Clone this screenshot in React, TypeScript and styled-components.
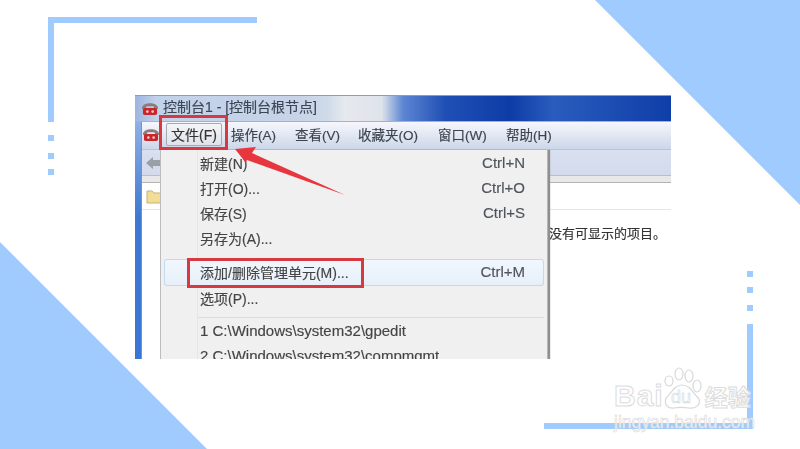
import React from "react";
import styled, { createGlobalStyle } from "styled-components";

const GlobalStyle = createGlobalStyle`
  html, body { margin: 0; padding: 0; background: #fff; }
  body { font-family: "Liberation Sans", "Noto Sans CJK SC", sans-serif; }
  * { box-sizing: border-box; }
`;

const blue = "#a0cbff";

const Slide = styled.div`
  position: relative;
  width: 800px;
  height: 449px;
  overflow: hidden;
  background: #fff;
`;

const Decor = styled.svg`
  position: absolute;
  inset: 0;
`;

const Window = styled.div`
  position: absolute;
  left: 135px;
  top: 95px;
  width: 536px;
  height: 264px;
  overflow: hidden;
  display: flex;
  flex-direction: column;
  background: #fff;
  color: #333;
  filter: blur(0.6px);
  -webkit-text-stroke: 0.15px currentColor;
`;

const TitleBar = styled.div`
  height: 27px;
  flex: none;
  display: flex;
  align-items: center;
  gap: 4px;
  padding-left: 6px;
  font-size: 14px;
  color: #3c4654;
  background: linear-gradient(90deg, #9db4e0 0%, #c2d2ea 4%, #c6d3e8 30%, #cfdbe9 36%, #e6e9ee 39%, #dfe4ea 46%, #5d86d3 50%, #1f4fb5 58%, #0e3ca6 70%, #2a5cbd 78%, #0f3ea8 100%);
  border-top: 1px solid #7f9bd8;
  border-bottom: 1px solid #9fb2d4;
`;

const TitleText = styled.span`
  padding-bottom: 6px;
`;

const Body = styled.div`
  flex: 1;
  display: flex;
  min-height: 0;
`;

const Edge = styled.div`
  width: 7px;
  flex: none;
  background: linear-gradient(180deg, #8fb0e6, #3f78d2 40%, #3a76d4);
  border-right: 1px solid #8a8f98;
`;

const Main = styled.div`
  flex: 1;
  display: flex;
  flex-direction: column;
  min-width: 0;
`;

const MenuBar = styled.div`
  height: 28px;
  flex: none;
  display: flex;
  align-items: center;
  padding-bottom: 3px;
  font-size: 13.5px;
  color: #3d4450;
  background: linear-gradient(180deg, #f6f7fc 0%, #ccd7e9 100%);
  border-bottom: 1px solid #b9c3d2;
`;

const MenuItem = styled.span<{ $w: number }>`
  width: ${(p) => p.$w}px;
  flex: none;
  white-space: nowrap;
`;

const FileTab = styled.span`
  width: 56px;
  height: 23px;
  margin: 0 9px 0 6px;
  flex: none;
  display: flex;
  align-items: center;
  justify-content: center;
  border: 1px solid #a4a9b2;
  border-radius: 2px;
  font-size: 14px;
  color: #333;
  background: linear-gradient(180deg, #f4f5f7, #dfe3e9);
`;

const Toolbar = styled.div`
  height: 26px;
  flex: none;
  display: flex;
  align-items: center;
  padding-left: 3px;
  background: linear-gradient(180deg, #d9e1f0, #d2daec);
  border-bottom: 1px solid #b9bfca;
`;

const Band = styled.div`
  height: 7px;
  flex: none;
  background: #e8e8ea;
  border-bottom: 1px solid #b5b2b0;
`;

const Header = styled.div`
  height: 27px;
  flex: none;
  display: flex;
  align-items: center;
  padding-left: 4px;
  background: #fff;
  border-bottom: 1px solid #e3e6ea;
`;

const Content = styled.div`
  flex: 1;
  display: flex;
  justify-content: flex-end;
  padding: 13px 5px 0 0;
  font-size: 13px;
  color: #333;
  background: #fff;
`;

const Menu = styled.div`
  position: absolute;
  left: 25px;
  top: 55px;
  width: 388px;
  height: 220px;
  padding-top: 1px;
  background: #f0f0f0;
  border-left: 1px solid #bdbdbd;
  border-right: 1px solid #b5b5b5;
  box-shadow: 2px 0 1px #8f8f8f;
  font-size: 14px;
  color: #444;
  &::before {
    content: "";
    position: absolute;
    left: 36px;
    top: 0;
    bottom: 0;
    width: 1px;
    background: #e6e6e6;
  }
`;

const Row = styled.div<{ $on?: boolean; $h?: number; $path?: boolean }>`
  position: relative;
  display: flex;
  align-items: center;
  justify-content: space-between;
  height: ${(p) => p.$h ?? 25}px;
  margin: 0 3px;
  padding: 0 19px 2px 36px;
  border-radius: 3px;
  white-space: nowrap;
  ${(p) => (p.$path ? "font-size: 15px;" : "")}
  ${(p) =>
    p.$on
      ? `background: linear-gradient(180deg, #f2f7fd, #e6eff9); box-shadow: inset 0 0 0 1px #c5d8ee;`
      : ""}
`;

const Shortcut = styled.span`
  font-size: 15px;
  color: #4f545c;
`;

const Divider = styled.div`
  height: 1px;
  margin: 0 3px 0 37px;
  background: #dcdcdc;
`;

const Highlight = styled.div<{ $x: number; $y: number; $w: number; $h: number }>`
  position: absolute;
  left: ${(p) => p.$x}px;
  top: ${(p) => p.$y}px;
  width: ${(p) => p.$w}px;
  height: ${(p) => p.$h}px;
  border: 3px solid #d63a40;
  filter: blur(0.4px);
`;

const Watermark = styled.div`
  position: absolute;
  left: 614px;
  top: 380px;
  width: 150px;
  color: rgba(255, 255, 255, 0.85);
  -webkit-text-stroke: 1px #dcdcdc;
  font-family: "Liberation Sans", "Noto Sans CJK SC", sans-serif;
`;

const MarkTop = styled.div`
  display: flex;
  align-items: center;
  height: 32px;
  font-size: 30px;
  font-weight: 700;
  letter-spacing: 1px;
`;

const MarkCn = styled.span`
  font-size: 23px;
  margin-left: 41px;
  letter-spacing: 0;
`;

const MarkUrl = styled.div`
  font-size: 17.5px;
  line-height: 20px;
  white-space: nowrap;
  -webkit-text-stroke: 0.6px #d8d8d8;
`;

const Paw = styled.div`
  position: absolute;
  left: 49px;
  top: -13px;
  width: 40px;
  height: 44px;
`;

const PawMark = styled.span`
  position: absolute;
  left: 8px;
  top: 20px;
  font-size: 18px;
  font-weight: 400;
  -webkit-text-stroke: 0.6px #d4d4d4;
`;

const PhoneIcon = () => (
  <svg width="18" height="15" viewBox="0 0 20 17" style={{ flex: "none" }}>
    <path d="M1 7 C3 1 17 1 19 7 L19 9 L15 9 L14 6 L6 6 L5 9 L1 9 Z" fill="#8c7b78" />
    <rect x="2" y="8" width="16" height="8" rx="2" fill="#c8262a" />
    <circle cx="7" cy="12" r="1.5" fill="#f2c6c6" />
    <circle cx="13" cy="12" r="1.5" fill="#f2c6c6" />
  </svg>
);

export default function App() {
  return (
    <Slide>
      <GlobalStyle />
      <Decor width="800" height="449">
        <polygon points="595,0 800,0 800,205" fill={blue} />
        <polygon points="0,242 207,449 0,449" fill={blue} />
        <g fill={blue}>
          <path d="M48 17 H257 V23 H54 V122 H48 Z" />
          <rect x="48" y="135" width="6" height="6" />
          <rect x="48" y="153" width="6" height="6" />
          <rect x="48" y="169" width="6" height="6" />
          <path d="M747 324 H753 V429 H544 V423 H747 Z" />
          <rect x="747" y="271" width="6" height="6" />
          <rect x="747" y="287" width="6" height="6" />
          <rect x="747" y="305" width="6" height="6" />
        </g>
      </Decor>

      <Window>
        <TitleBar>
          <PhoneIcon />
          <TitleText>控制台1 - [控制台根节点]</TitleText>
        </TitleBar>
        <Body>
          <Edge />
          <Main>
            <MenuBar>
              <PhoneIcon />
              <FileTab>文件(F)</FileTab>
              <MenuItem $w={64}>操作(A)</MenuItem>
              <MenuItem $w={63}>查看(V)</MenuItem>
              <MenuItem $w={80}>收藏夹(O)</MenuItem>
              <MenuItem $w={68}>窗口(W)</MenuItem>
              <MenuItem $w={60}>帮助(H)</MenuItem>
            </MenuBar>
            <Toolbar>
              <svg width="16" height="14" viewBox="0 0 16 14">
                <path d="M1 7 L8 1 V4 H15 V10 H8 V13 Z" fill="#9aa0a8" />
              </svg>
            </Toolbar>
            <Band />
            <Header>
              <svg width="16" height="15" viewBox="0 0 16 15">
                <path d="M1 2 H6 L8 4 H15 V14 H1 Z" fill="#f3dc96" stroke="#c9b36c" />
              </svg>
            </Header>
            <Content>没有可显示的项目。</Content>
          </Main>
        </Body>
        <Menu>
          <Row>
            <span>新建(N)</span>
            <Shortcut>Ctrl+N</Shortcut>
          </Row>
          <Row>
            <span>打开(O)...</span>
            <Shortcut>Ctrl+O</Shortcut>
          </Row>
          <Row>
            <span>保存(S)</span>
            <Shortcut>Ctrl+S</Shortcut>
          </Row>
          <Row>
            <span>另存为(A)...</span>
          </Row>
          <Row $h={8} />
          <Row $on $h={27}>
            <span>添加/删除管理单元(M)...</span>
            <Shortcut>Ctrl+M</Shortcut>
          </Row>
          <Row>
            <span>选项(P)...</span>
          </Row>
          <Row $h={6} />
          <Divider />
          <Row $h={26} $path>
            <span>1 C:\Windows\system32\gpedit</span>
          </Row>
          <Row $path>
            <span>2 C:\Windows\system32\compmgmt</span>
          </Row>
        </Menu>
      </Window>

      <Highlight $x={159} $y={115} $w={69} $h={35} />
      <Highlight $x={187} $y={258} $w={177} $h={30} />
      <Decor width="800" height="449">
        <polygon points="235,149 256,147 252,153 345,195 247,160 246,163" fill="#e8363f" />
      </Decor>

      <Watermark>
        <Paw>
          <svg width="40" height="44" viewBox="0 0 40 44">
            <g fill="rgba(255,255,255,0.85)" stroke="#d8d8d8" strokeWidth="1.2">
              <ellipse cx="6" cy="14" rx="4" ry="5" />
              <ellipse cx="16" cy="7" rx="4" ry="6" />
              <ellipse cx="26" cy="9" rx="4" ry="6" />
              <ellipse cx="34" cy="19" rx="4" ry="6" />
              <path d="M19 18 C27 18 30 26 36 32 C38 38 32 42 26 41 C20 40 16 40 11 41 C4 42 1 37 3 31 C8 27 11 18 19 18 Z" />
            </g>
          </svg>
          <PawMark>du</PawMark>
        </Paw>
        <MarkTop>
          Bai
          <MarkCn>经验</MarkCn>
        </MarkTop>
        <MarkUrl>jingyan.baidu.com</MarkUrl>
      </Watermark>
    </Slide>
  );
}
